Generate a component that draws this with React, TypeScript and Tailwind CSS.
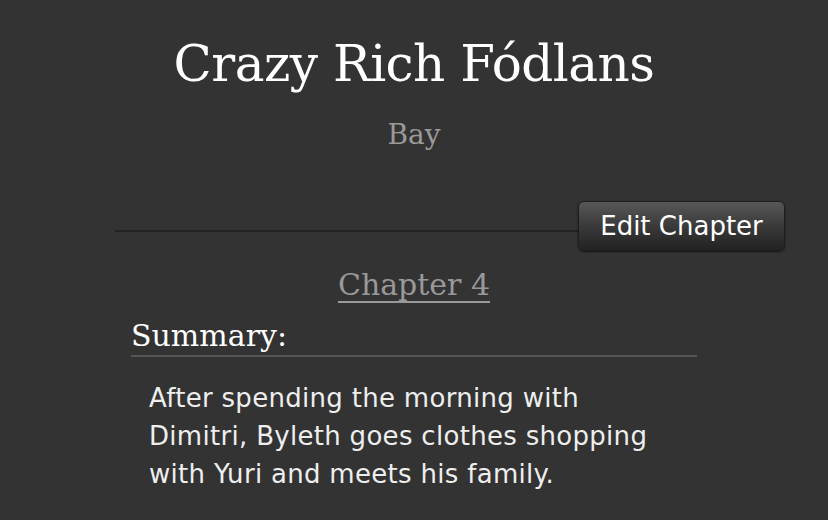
export default function App() {
  return (
    <div className="min-h-screen w-full bg-[#333333] text-white">
      {/* Header */}
      <div className="pt-[28px] text-center" style={{ fontFamily: '"DejaVu Serif", serif' }}>
        <h1 className="text-[50px] leading-[72px] text-white tracking-[-0.5px]">Crazy Rich Fódlans</h1>
        <p className="mt-[15px] text-[28px] leading-[40px] text-[#999999]">Bay</p>
      </div>

      {/* Divider + edit button */}
      <div className="mt-[46px] flex items-start pl-[115px] pr-[43px]">
        <div className="mt-[29px] h-[2px] flex-1 bg-[#222222]" />
        <button
          className="h-[50px] w-[207px] rounded-[6px] border border-[#1e1e1e] bg-gradient-to-b from-[#585858] via-[#3a3a3a] to-[#222222] text-[26px] text-white shadow-[0_1px_2px_rgba(0,0,0,0.6)]"
          style={{ fontFamily: '"DejaVu Sans", sans-serif' }}
        >
          Edit Chapter
        </button>
      </div>

      {/* Chapter */}
      <div className="mx-auto w-[598px]">
        <div className="mt-[12px] text-center" style={{ fontFamily: '"DejaVu Serif", serif' }}>
          <a className="text-[30px] leading-[44px] text-[#999999] underline decoration-2 underline-offset-[6px]">Chapter 4</a>
        </div>

        <div className="mx-[16px] mt-[10px] border-b-2 border-[#555555]">
          <h2 className="text-[30px] leading-[38px] text-white" style={{ fontFamily: '"DejaVu Serif", serif' }}>Summary:</h2>
        </div>

        <p
          className="ml-[34px] mt-[22px] w-[515px] text-[26px] leading-[38px] tracking-[0.3px] text-[#eeeeee]"
          style={{ fontFamily: '"DejaVu Sans", sans-serif' }}
        >
          After spending the morning with Dimitri, Byleth goes clothes shopping with Yuri and meets his family.
        </p>
      </div>
    </div>
  );
}
